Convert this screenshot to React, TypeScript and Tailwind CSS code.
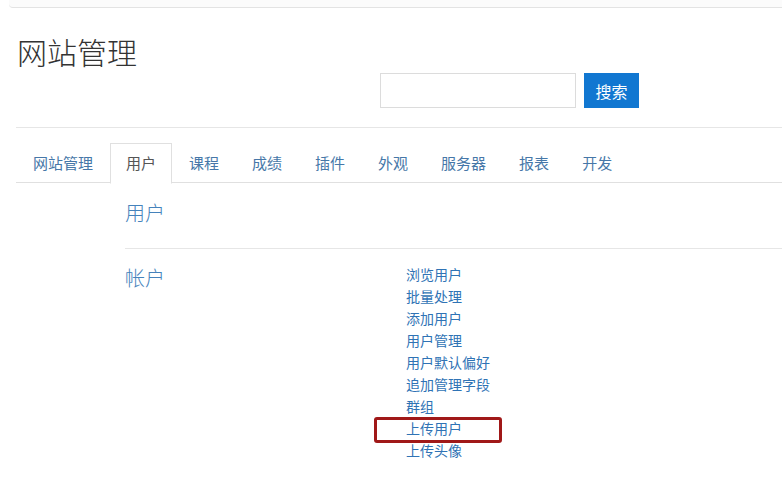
import React from "react";

const font = { fontFamily: '"Noto Sans CJK SC", "Noto Sans", sans-serif' };

const tabs = ["网站管理", "用户", "课程", "成绩", "插件", "外观", "服务器", "报表", "开发"];
const links = ["浏览用户", "批量处理", "添加用户", "用户管理", "用户默认偏好", "追加管理字段", "群组", "上传用户", "上传头像"];

export default function App() {
  return (
    <div className="w-[782px] h-[478px] bg-white overflow-hidden relative text-[#333]" style={font}>
      <div className="ml-[9px] h-[8px] bg-[#fbfbfb] border-b border-[#e3e3e3] rounded-bl-[4px]" />
      <div className="pl-[17px] pt-[22px] text-[30px] leading-[42px] font-light text-[#333]">网站管理</div>
      <div className="flex items-center pl-[380px] mt-[1px] gap-[8px]">
        <div className="w-[196px] h-[35px] border border-[#dcdcdc] bg-white" />
        <div className="w-[55px] h-[35px] bg-[#1177d1] text-white text-[16px] flex items-center justify-center">搜索</div>
      </div>
      <div className="ml-[16px] mt-[19px] border-t border-[#e6e6e6]" />
      <div className="ml-[16px] mt-[15px] flex border-b border-[#e0e0e0] h-[40px]">
        {tabs.map((t, i) => (
          <div
            key={t}
            className={
              "h-[40px] px-[15px] mr-[1px] flex items-center text-[15px] border " +
              (i === 1
                ? "border-[#e0e0e0] border-b-white bg-white text-[#555] -mb-[1px] h-[41px] pb-[1px]"
                : "border-transparent text-[#4677a8]") +
              (i === 0 ? " ml-[1px]" : "")
            }
          >
            {t}
          </div>
        ))}
      </div>
      <div className="pl-[125px]">
        <div className="mt-[16px] text-[20px] leading-[28px] font-light text-[#4582bb]">用户</div>
        <div className="mt-[21px] border-t border-[#e6e6e6]" />
        <div className="flex mt-[15px]">
          <div className="w-[281px] text-[20px] leading-[28px] font-light text-[#4582bb]">帐户</div>
          <div className="flex flex-col -mt-[1px]">
            {links.map((l) => (
              <div key={l} className="text-[14px] leading-[22px] text-[#2f73b5]">{l}</div>
            ))}
          </div>
        </div>
      </div>
      <div className="absolute left-[374px] top-[417px] w-[128px] h-[26px] border-[3px] border-[#a01818] rounded-[3px]" />
    </div>
  );
}
